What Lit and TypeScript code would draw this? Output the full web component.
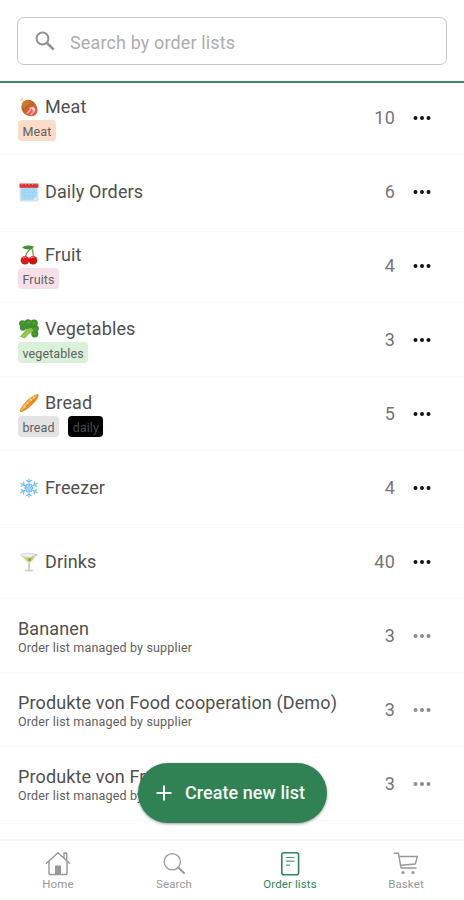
import { LitElement, html, css, svg, nothing } from "lit";
import { customElement } from "lit/decorators.js";
import { classMap } from "lit/directives/class-map.js";

interface Tag { text: string; tone: string }
interface OrderList { icon?: string; name: string; tags?: Tag[]; count: number; managed?: boolean }

const lists: OrderList[] = [
  { icon: "meat", name: "Meat", tags: [{ text: "Meat", tone: "peach" }], count: 10 },
  { icon: "calendar", name: "Daily Orders", count: 6 },
  { icon: "cherry", name: "Fruit", tags: [{ text: "Fruits", tone: "pink" }], count: 4 },
  { icon: "broccoli", name: "Vegetables", tags: [{ text: "vegetables", tone: "green" }], count: 3 },
  { icon: "bread", name: "Bread", tags: [{ text: "bread", tone: "grey" }, { text: "daily", tone: "black" }], count: 5 },
  { icon: "snow", name: "Freezer", count: 4 },
  { icon: "drink", name: "Drinks", count: 40 },
  { name: "Bananen", count: 3, managed: true },
  { name: "Produkte von Food cooperation (Demo)", count: 3, managed: true },
  { name: "Produkte von Fr", count: 3, managed: true },
];

const pictures: Record<string, unknown> = {
  meat: svg`
    <path d="M5 5 2.500 2.500" stroke="#f3dfb0" stroke-width="2" stroke-linecap="round"/>
    <circle cx="1.800" cy="3.200" r="1" fill="#f6e3b4"/><circle cx="3.200" cy="1.600" r="1" fill="#f6e3b4"/>
    <path d="M3.500 6C5.500 3 10 1.800 13.500 4S19 10.500 18 15s-7 5.500-11.500 2.500S1.500 9.500 3.500 6Z" fill="#b96a24"/>
    <path d="M3.500 6C6 3.200 9.500 3 12 4L5 11C3 9.500 2.500 7.500 3.500 6Z" fill="#c97c30"/>
    <path d="M6 16C6 12 11 8 17 8.500c1.800 3 1.700 6.500 0 8.500s-7.500 2.500-11-1Z" fill="#f0564c"/>
    <path d="m8.500 16 3-3m.5 4.500 3.500-4M11 11.500l3-1" stroke="#ffc4b2" stroke-width="1.400" stroke-linecap="round"/>
    <circle cx="14.500" cy="12" r="1.500" fill="#ffe4d4"/>`,
  calendar: svg`
    <rect x=".6" y="2" width="18.800" height="17.500" rx="1.200" fill="#d9e2e6"/>
    <path d="M2.200 5h15.600v12.800H2.200z" fill="#a5d9f7"/>
    <path d="M6 7v11M10 7v11M14 7v11M2.500 10.500h15M2.500 14h15" stroke="#98d0f0" stroke-width=".6"/>
    <path d="M.6 1.500h18.800v4.300H.6z" fill="#d93636"/>
    <path d="M3 .8v2m3.500-2v2M10 .8v2m3.500-2v2M17 .8v2" stroke="#eebcbc" stroke-width=".9"/>
    <path d="m13.500 18 4.300-4v4z" fill="#d2edfb"/>`,
  cherry: svg`
    <path d="M6 13C7 8 9 5 13.500 3M14.500 14c0-4-.5-7-1.500-11" fill="none" stroke="#689f38" stroke-width="1.200"/>
    <path d="M3 2.500C6-.2 11-.2 15 1.800 12 5.200 7 5.200 3 2.500Z" fill="#3c9139"/>
    <circle cx="6" cy="15.200" r="4.300" fill="#d51b1b"/><circle cx="14" cy="15.200" r="4.300" fill="#c91414"/>
    <path d="M4 12.800c.8-.8 2-.9 3-.6M12 12.800c.8-.8 2-.9 3-.6" stroke="#ff8d80" stroke-width="1.200" stroke-linecap="round" fill="none"/>`,
  broccoli: svg`
    <g fill="#3f8f2e"><circle cx="3.500" cy="4.500" r="3.300"/><circle cx="9" cy="3.800" r="3.600"/><circle cx="15" cy="4.300" r="3.800"/><circle cx="3.800" cy="8.700" r="3"/><circle cx="16.500" cy="9.500" r="3.300"/><circle cx="15.800" cy="14.800" r="3.600"/><circle cx="10" cy="8" r="4"/></g>
    <path d="m7.500 10 5-1 2 3-4.500 3-4.500 4.500L1 17.500l4-4.500z" fill="#8bc34a"/>
    <path d="m4 17.500 5.500-5" stroke="#a8d35e" fill="none"/>
    <g fill="#55a335"><circle cx="4" cy="4" r="1.500"/><circle cx="9.500" cy="3.500" r="1.600"/><circle cx="15" cy="4" r="1.600"/><circle cx="16" cy="10" r="1.400"/><circle cx="15.500" cy="15" r="1.300"/></g>`,
  bread: svg`
    <path d="M1.200 18.800C-.1 17.300 3 13 7 8.500S17 .6 19 1.200s-.5 5.300-5 9.800-11.300 9.300-12.800 7.800Z" fill="#e58b27"/>
    <path d="M3 16.500C5 13 11 6.500 17 3" stroke="#f5b052" stroke-width="2.200" stroke-linecap="round" fill="none"/>
    <path d="m5 13 1.300 1.500m1.700-5 1.300 1.500m1.900-5 1.300 1.500m1.700-4 1.300 1.500" stroke="#ffdc9a" stroke-width="1.100" stroke-linecap="round"/>`,
  snow: svg`
    <g fill="none" stroke="#7cc2f1" stroke-width="1.250" stroke-linecap="round">
      ${[0, 60, 120, 180, 240, 300].map((a) => svg`<path transform="rotate(${a} 10 10)" d="M10 9V.8M7.700 2.300 10 4.500l2.300-2.200M8.300 6.300 10 7.700l1.700-1.400"/>`)}
    </g>`,
  drink: svg`
    <path d="M2 3.500h16l-7 8v6h-2v-6z" fill="#e1e8e2"/>
    <path d="M4 5.200h12l-5.800 5.800z" fill="#d3cf72"/>
    <ellipse cx="10" cy="3.300" rx="8.300" ry="1.900" fill="#edf0ee" stroke="#c5cdca" stroke-width=".7"/>
    <path d="m9 9 6.500-6" stroke="#b69b5a" stroke-width=".8"/>
    <circle cx="10.500" cy="7.500" r="1.500" fill="#8d9e31"/><circle cx="17" cy="2.600" r=".9" fill="#ec9e90"/>
    <path d="M10 11.500V18" stroke="#b7c0bf" stroke-width="1.200"/><ellipse cx="10" cy="18.500" rx="4.500" ry="1.100" fill="#cbd2d1"/>`,
};

const navIcons: Record<string, unknown> = {
  Home: svg`<path d="M1.500 12.300 13 1.800l11.500 10.500M19 6.800V2h2.700v7.200M4 11v11.500q0 1 1 1h16q1 0 1-1V11" fill="none" stroke="currentColor" stroke-width="1.400" stroke-linecap="round" stroke-linejoin="round"/><path d="M10 14.500h6v8.800h-6z" fill="currentColor"/>`,
  Search: svg`<circle cx="11.300" cy="10.800" r="8.100" fill="none" stroke="currentColor" stroke-width="1.300"/><path d="m17.200 16.500 5.800 5.500" stroke="currentColor" stroke-width="2" stroke-linecap="round"/>`,
  "Order lists": svg`<rect x="4.800" y="1.800" width="16.800" height="22" rx="2" fill="none" stroke="currentColor" stroke-width="1.600"/><path d="M9 6.500h8.500M9 10.200h8.500M9 14.200h4" stroke="currentColor" stroke-width="1.200" opacity=".8"/>`,
  Basket: svg`<path d="M1.300 2.300h4.200L8 17h15M6 5.500h18.300l-2 7.500-14.800 1.300" fill="none" stroke="currentColor" stroke-width="1.400" stroke-linecap="round" stroke-linejoin="round"/><circle cx="10" cy="21.500" r="1.600" fill="currentColor"/><circle cx="20" cy="21.500" r="1.600" fill="currentColor"/>`,
};

@customElement("order-list-row")
class OrderListRow extends LitElement {
  static properties = { item: { attribute: false } };
  declare item: OrderList;

  static styles = css`
    :host { display: flex; align-items: center; height: 74px; box-sizing: border-box; padding: 0 33px 0 18px; border-bottom: 1px solid #f9f9f9; }
    .info { flex: 1; min-width: 0; display: flex; flex-direction: column; }
    .title { display: flex; align-items: center; gap: 5px; height: 22px; font-size: 18px; letter-spacing: .12px; color: #505050; white-space: nowrap; }
    .emoji { width: 20px; height: 20px; margin: 0 1px; flex: none; }
    .tags { display: flex; gap: 9px; margin-top: 2px; }
    .info:has(.tags) { padding-top: 1px; }
    .info:has(.note) { padding-top: 3px; }
    .tag { height: 21px; line-height: 23px; border-radius: 4px; padding: 0 4.500px; font-size: 12.500px; letter-spacing: .1px; color: #606060; }
    .peach { background: #fbdcc9; } .pink { background: #f6dfe9; } .green { background: #d9f0d9; }
    .grey { background: #e3e3e3; } .black { background: #000; color: #484848; }
    .note { font-size: 12.500px; line-height: 18px; color: #606060; letter-spacing: .17px; }
    .count { font-size: 18px; color: #757575; margin-right: 18px; letter-spacing: .2px; }
    .dots { width: 18px; height: 6px; flex: none; fill: #111; }
    .dim { fill: #8b8b8b; }
  `;

  render() {
    const { icon, name, tags, count, managed } = this.item;
    return html`
      <div class="info">
        <div class="title">${icon ? html`<svg class="emoji" viewBox="0 0 20 20">${pictures[icon]}</svg>` : nothing}<span>${name}</span></div>
        ${tags ? html`<div class="tags">${tags.map((t) => html`<span class="tag ${t.tone}">${t.text}</span>`)}</div>` : nothing}
        ${managed ? html`<div class="note">Order list managed by supplier</div>` : nothing}
      </div>
      <span class="count">${count}</span>
      <svg class=${classMap({ dots: true, dim: !!managed })} viewBox="0 0 18 6"><circle cx="2.500" cy="3" r="2"/><circle cx="9" cy="3" r="2"/><circle cx="15.500" cy="3" r="2"/></svg>
    `;
  }
}

@customElement("app-root")
class AppRoot extends LitElement {
  static styles = css`
    :host { display: flex; flex-direction: column; position: relative; width: 464px; height: 900px; overflow: hidden; background: #fff; font-family: Roboto, "Liberation Sans", sans-serif; }
    header { flex: none; height: 83px; box-sizing: border-box; padding: 17px 17px 0; border-bottom: 2px solid #3d8967; }
    .field { display: flex; align-items: center; height: 48px; box-sizing: border-box; border: 1px solid #c6c6c6; border-radius: 7px; padding-left: 17px; gap: 15px; font-size: 18px; letter-spacing: .13px; color: #adadad; }
    .field svg { width: 20px; height: 20px; margin-top: -1px; }
    .field span { margin: 2px 0 0 0; }
    main { flex: 1; min-height: 0; overflow: hidden; }
    .rows { margin-top: -2px; }
    nav { flex: none; height: 61px; box-sizing: border-box; border-top: 2px solid #f5f5f5; display: grid; grid-template-columns: repeat(4, 1fr); background: #fff; }
    .tab { display: flex; flex-direction: column; align-items: center; padding-top: 10px; color: #989898; font-size: 11.500px; line-height: 14px; letter-spacing: .1px; }
    .tab svg { width: 26px; height: 26px; }
    .tab.active { color: #318660; }
    .create { position: absolute; left: 138px; top: 763px; width: 189px; height: 60px; border: 0; border-radius: 30px; display: flex; align-items: center; padding: 0 0 1px 18px; gap: 13px; background: #308154; color: #f3faf5; font: 500 18px Roboto, "Liberation Sans", sans-serif; letter-spacing: .05px; white-space: nowrap; box-shadow: 0 1px 3px rgba(0, 0, 0, .4); }
    .create svg { width: 16px; height: 16px; flex: none; }
  `;

  render() {
    return html`
      <header>
        <div class="field">
          <svg viewBox="0 0 20 20" fill="none" stroke="#929292"><circle cx="7.500" cy="7.500" r="5.900" stroke-width="2"/><path d="m12 12 6.700 6.700" stroke-width="2.600"/></svg>
          <span>Search by order lists</span>
        </div>
      </header>
      <main><div class="rows">${lists.map((item) => html`<order-list-row .item=${item}></order-list-row>`)}</div></main>
      <nav>
        ${Object.keys(navIcons).map((label) => html`
          <div class=${classMap({ tab: true, active: label === "Order lists" })}><svg viewBox="0 0 26 26">${navIcons[label]}</svg><span>${label}</span></div>`)}
      </nav>
      <button class="create"><svg viewBox="0 0 16 16"><path d="M8 .5v15M.5 8h15" stroke="currentColor" stroke-width="2"/></svg>Create new list</button>
    `;
  }
}
